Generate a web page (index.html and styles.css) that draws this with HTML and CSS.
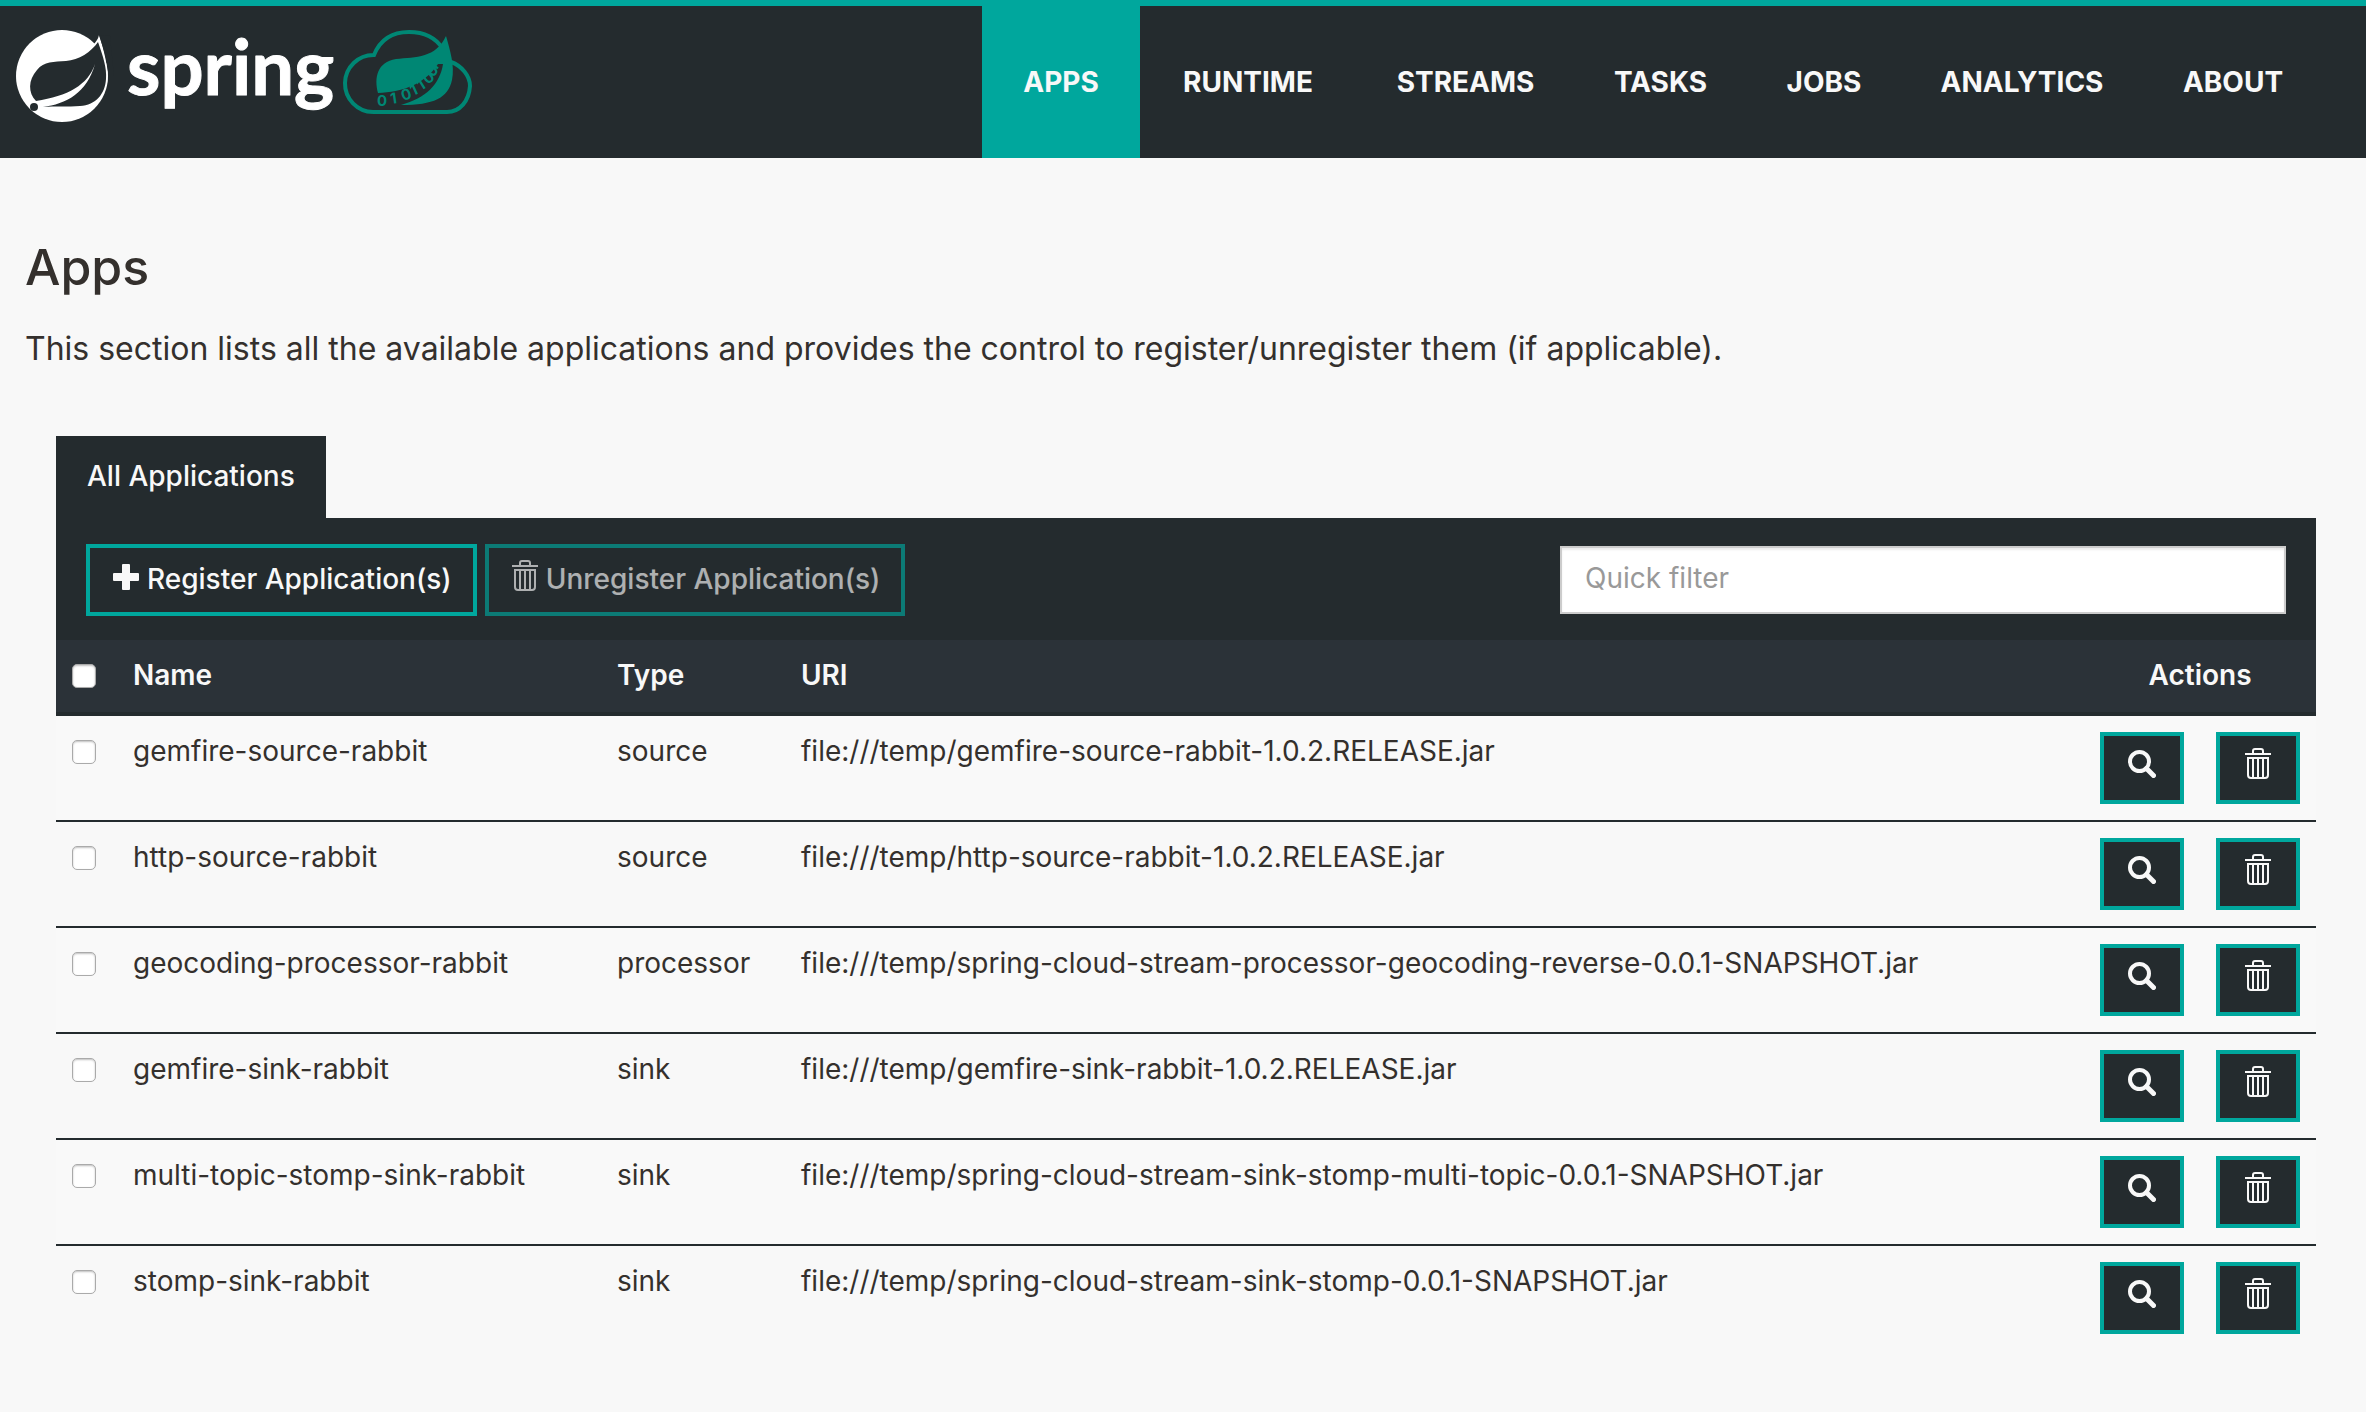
FILE: index.html
```html
<!DOCTYPE html>
<html lang="en">
<head>
<meta charset="utf-8">
<meta name="viewport" content="width=device-width, initial-scale=1">
<title>Apps</title>
<link rel="stylesheet" href="styles.css">
</head>
<body>
<svg class="sprite" aria-hidden="true">
  <symbol id="icon-plus" viewBox="0 0 26 26">
    <path fill="currentColor" d="M10 0h6q1 0 1 1v8h8q1 0 1 1v6q0 1-1 1h-8v8q0 1-1 1h-6q-1 0-1-1v-8H1q-1 0-1-1v-6q0-1 1-1h8V1q0-1 1-1z"/>
  </symbol>
  <symbol id="icon-trash" viewBox="0 0 26 31">
    <g fill="none" stroke="currentColor" stroke-width="2">
      <path d="M0 6h26M8 6V3q0-2 2-2h6q2 0 2 2v3"/>
      <path d="M3 10h20v17q0 3-3 3H6q-3 0-3-3z"/>
      <path d="M8 10v19M13 10v19M18 10v19"/>
    </g>
  </symbol>
  <symbol id="icon-search" viewBox="0 0 28 28">
    <circle cx="11.5" cy="11.5" r="9.5" fill="none" stroke="currentColor" stroke-width="4"/>
    <path d="M18.5 18.5l7 7" stroke="currentColor" stroke-width="5" stroke-linecap="round"/>
  </symbol>
</svg>

<header class="topbar">
  <a class="brand" href="#" aria-label="Spring Cloud Data Flow">
    <svg class="brand-logo" viewBox="16 30 456 92">
      <circle cx="62" cy="76" r="46" fill="#fff"/>
      <path fill="#fff" d="M93 45Q98 40 99 35C104 50 109 68 107 84L96 60z"/>
      <path class="cutout" d="M110 36L99 35C104 50 109 66 108 76L114 76z"/>
      <path class="cutout" d="M98 42C103 56 107 68 106 79C105 94 96 105 80 106C68 107 55 106 43 107C66 104 87 93 95 64C88 85 68 96 36 101C28 93 28 80 37 70C44 61 54 62 66 61C79 60 91 52 98 42z"/>
      <circle class="cutout" cx="34" cy="107" r="4"/>
      <text class="wordmark" x="127" y="95">spring</text>
      <g class="cloud">
        <path class="cloud-line" d="M373 112A28 28 0 1 1 374 55C380 40 392 32 409 32C424 32 436 38 443 49M451 62C462 66 470 76 470 86C469 101 460 112 447 112H373"/>
        <path d="M446 36C450 50 455 66 452 80C448 98 434 105 401 105C426 98 440 84 443 64H438C424 85 402 92 378 93C374 78 377 62 396 59C416 57 436 58 446 36z"/>
        <text class="bits" x="377 391 403 413 421 428 433 436" y="106 104 101 96 91 85 78 72" rotate="0 -8 -18 -25 -32 -40 -50 -60">01011001</text>
      </g>
    </svg>
  </a>
  <nav class="nav">
    <a class="nav-link active" href="#">APPS</a>
    <a class="nav-link" href="#">RUNTIME</a>
    <a class="nav-link" href="#">STREAMS</a>
    <a class="nav-link" href="#">TASKS</a>
    <a class="nav-link" href="#">JOBS</a>
    <a class="nav-link" href="#">ANALYTICS</a>
    <a class="nav-link" href="#">ABOUT</a>
  </nav>
</header>

<main class="content">
  <h1 class="title">Apps</h1>
  <p class="lead">This section lists all the available applications and provides the control to register/unregister them (if applicable).</p>

  <section class="panel">
    <a class="tab" href="#">All Applications</a>
    <div class="toolbar">
      <div class="toolbar-actions">
        <button class="btn btn-text" type="button"><svg class="icon-plus"><use href="#icon-plus"/></svg>Register Application(s)</button>
        <button class="btn btn-text" type="button" disabled><svg class="icon-trash"><use href="#icon-trash"/></svg>Unregister Application(s)</button>
      </div>
      <input class="filter" type="text" placeholder="Quick filter" aria-label="Quick filter">
    </div>
    <table class="apps">
      <colgroup><col class="col-check"><col class="col-name"><col class="col-type"><col><col class="col-actions"></colgroup>
      <thead>
        <tr><th class="check"><input type="checkbox" aria-label="Select all"></th><th>Name</th><th>Type</th><th>URI</th><th class="actions-head">Actions</th></tr>
      </thead>
      <tbody>
        <tr>
          <td class="check"><input type="checkbox" aria-label="Select gemfire-source-rabbit"></td>
          <td>gemfire-source-rabbit</td><td>source</td><td>file:///temp/gemfire-source-rabbit-1.0.2.RELEASE.jar</td>
          <td><div class="row-actions"><button class="btn btn-icon" type="button" aria-label="Details"><svg class="icon-search"><use href="#icon-search"/></svg></button><button class="btn btn-icon" type="button" aria-label="Unregister"><svg class="icon-trash"><use href="#icon-trash"/></svg></button></div></td>
        </tr>
        <tr>
          <td class="check"><input type="checkbox" aria-label="Select http-source-rabbit"></td>
          <td>http-source-rabbit</td><td>source</td><td>file:///temp/http-source-rabbit-1.0.2.RELEASE.jar</td>
          <td><div class="row-actions"><button class="btn btn-icon" type="button" aria-label="Details"><svg class="icon-search"><use href="#icon-search"/></svg></button><button class="btn btn-icon" type="button" aria-label="Unregister"><svg class="icon-trash"><use href="#icon-trash"/></svg></button></div></td>
        </tr>
        <tr>
          <td class="check"><input type="checkbox" aria-label="Select geocoding-processor-rabbit"></td>
          <td>geocoding-processor-rabbit</td><td>processor</td><td>file:///temp/spring-cloud-stream-processor-geocoding-reverse-0.0.1-SNAPSHOT.jar</td>
          <td><div class="row-actions"><button class="btn btn-icon" type="button" aria-label="Details"><svg class="icon-search"><use href="#icon-search"/></svg></button><button class="btn btn-icon" type="button" aria-label="Unregister"><svg class="icon-trash"><use href="#icon-trash"/></svg></button></div></td>
        </tr>
        <tr>
          <td class="check"><input type="checkbox" aria-label="Select gemfire-sink-rabbit"></td>
          <td>gemfire-sink-rabbit</td><td>sink</td><td>file:///temp/gemfire-sink-rabbit-1.0.2.RELEASE.jar</td>
          <td><div class="row-actions"><button class="btn btn-icon" type="button" aria-label="Details"><svg class="icon-search"><use href="#icon-search"/></svg></button><button class="btn btn-icon" type="button" aria-label="Unregister"><svg class="icon-trash"><use href="#icon-trash"/></svg></button></div></td>
        </tr>
        <tr>
          <td class="check"><input type="checkbox" aria-label="Select multi-topic-stomp-sink-rabbit"></td>
          <td>multi-topic-stomp-sink-rabbit</td><td>sink</td><td>file:///temp/spring-cloud-stream-sink-stomp-multi-topic-0.0.1-SNAPSHOT.jar</td>
          <td><div class="row-actions"><button class="btn btn-icon" type="button" aria-label="Details"><svg class="icon-search"><use href="#icon-search"/></svg></button><button class="btn btn-icon" type="button" aria-label="Unregister"><svg class="icon-trash"><use href="#icon-trash"/></svg></button></div></td>
        </tr>
        <tr>
          <td class="check"><input type="checkbox" aria-label="Select stomp-sink-rabbit"></td>
          <td>stomp-sink-rabbit</td><td>sink</td><td>file:///temp/spring-cloud-stream-sink-stomp-0.0.1-SNAPSHOT.jar</td>
          <td><div class="row-actions"><button class="btn btn-icon" type="button" aria-label="Details"><svg class="icon-search"><use href="#icon-search"/></svg></button><button class="btn btn-icon" type="button" aria-label="Unregister"><svg class="icon-trash"><use href="#icon-trash"/></svg></button></div></td>
        </tr>
      </tbody>
    </table>
  </section>
</main>
</body>
</html>
```
FILE: styles.css
```css
* {
  box-sizing: border-box;
}

body {
  margin: 0;
  background: #f8f8f8;
  color: #34302d;
  font-family: Inter, "Open Sans", sans-serif;
  font-size: 28px;
  line-height: 40px;
}

a {
  color: inherit;
  text-decoration: none;
}

.sprite {
  display: none;
}

.topbar {
  display: flex;
  justify-content: space-between;
  padding: 0 42px 0 16px;
  border-top: 6px solid #00a79d;
  background: #242b2e;
}

.brand {
  padding: 24px 0;
}

.brand-logo {
  display: block;
  width: 456px;
  height: 92px;
  overflow: visible;
}

.cutout {
  fill: #242b2e;
}

.wordmark {
  font-family: Lato, sans-serif;
  font-size: 76px;
  font-weight: 700;
  fill: #fff;
  stroke: #fff;
  stroke-width: 1px;
  stroke-linejoin: round;
}

.cloud {
  fill: #008774;
}

.cloud-line {
  fill: none;
  stroke: #008774;
  stroke-width: 4px;
}

.bits {
  font-size: 15px;
  font-weight: 700;
}

.nav {
  display: grid;
  grid-template-columns: 158px 216px 219px 171px 156px 240px 182px;
}

.nav-link {
  padding: 56px 0;
  color: #f8f8f8;
  font-weight: 700;
  text-align: center;
}

.active {
  background: #00a79d;
}

.content {
  padding: 84px 25px 60px;
}

.title {
  margin: 0;
  font-size: 50px;
  font-weight: 500;
  line-height: 50px;
}

.lead {
  margin: 35px 0 0;
  font-size: 32px;
  line-height: 44px;
}

.panel {
  margin: 65px 25px 0 31px;
}

.tab {
  display: inline-block;
  padding: 20px 31px 22px;
  background: #242b2e;
  color: #f8f8f8;
  font-weight: 500;
  vertical-align: top;
}

.toolbar {
  display: flex;
  align-items: center;
  justify-content: space-between;
  padding: 26px 30px 24px;
  background: #242b2e;
}

.toolbar-actions {
  display: flex;
  gap: 8px;
}

.btn {
  display: flex;
  height: 72px;
  padding: 12px 0;
  border: 4px solid #00a79d;
  background: #242b2e;
  color: #f8f8f8;
  font: inherit;
  font-weight: 500;
  line-height: 38px;
  white-space: nowrap;
}

.btn-text {
  gap: 8px;
  padding: 12px 21px 12px 23px;
}

.btn:disabled {
  opacity: 0.65;
}

.btn-icon {
  justify-content: center;
  width: 84px;
}

.icon-plus {
  width: 26px;
  height: 26px;
  margin-top: 4px;
}

.icon-trash {
  width: 26px;
  height: 31px;
}

.icon-search {
  width: 28px;
  height: 28px;
  margin-top: 2px;
}

.filter {
  width: 33%;
  height: 68px;
  padding: 12px 23px 16px;
  border: 2px solid #ccc;
  background: #fff;
  box-shadow: inset 0 2px 2px rgba(0, 0, 0, 0.08);
  color: #34302d;
  font: inherit;
}

.filter::placeholder {
  color: #999;
  opacity: 1;
}

.apps {
  width: 100%;
  table-layout: fixed;
  border-spacing: 0;
}

.col-check {
  width: 61px;
}

.col-name {
  width: 484px;
}

.col-type {
  width: 184px;
}

.col-actions {
  width: 232px;
}

th,
td {
  padding: 16px;
  line-height: 38px;
  text-align: left;
  vertical-align: top;
}

th {
  padding-bottom: 18px;
  border-bottom: 4px solid #242b2e;
  background: #2b3238;
  color: #f8f8f8;
  font-weight: 600;
}

.actions-head {
  text-align: center;
}

tbody tr + tr td {
  border-top: 2px solid #242b2e;
}

tbody tr:nth-child(odd) {
  background: #f9f9f9;
}

.check input {
  display: block;
  width: 24px;
  height: 24px;
  margin: 8px 0 0;
  border: 1px solid #aaa;
  border-radius: 5px;
  background: #fff;
  box-shadow: inset 0 1px 2px rgba(0, 0, 0, 0.25);
  appearance: none;
}

.row-actions {
  display: flex;
  justify-content: space-between;
}
```
